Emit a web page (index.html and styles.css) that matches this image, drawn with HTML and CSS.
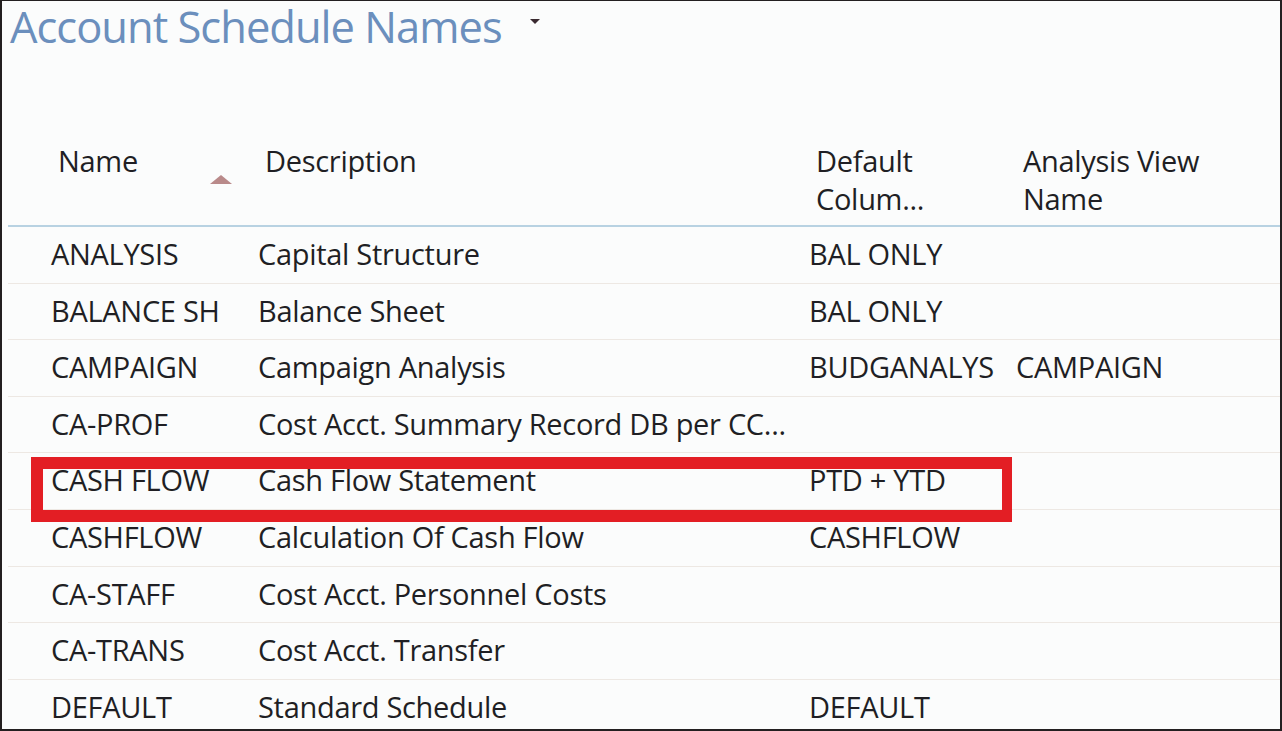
FILE: index.html
```html
<!DOCTYPE html>
<html>
<head>
<meta charset="utf-8">
<link rel="stylesheet" href="styles.css">
</head>
<body>
<div class="frame">
  <div class="title-bar">
    <h1 class="title">Account Schedule Names</h1>
    <span class="caret"></span>
  </div>
  <div class="table">
    <div class="head">
      <div class="hcell name-h"><span>Name</span><span class="sort"></span></div>
      <div class="hcell">Description</div>
      <div class="hcell">Default<br>Colum...</div>
      <div class="hcell">Analysis View<br>Name</div>
    </div>
    <div class="row"><div>ANALYSIS</div><div>Capital Structure</div><div>BAL ONLY</div><div></div></div>
    <div class="row"><div>BALANCE SH</div><div>Balance Sheet</div><div>BAL ONLY</div><div></div></div>
    <div class="row"><div>CAMPAIGN</div><div>Campaign Analysis</div><div>BUDGANALYS</div><div>CAMPAIGN</div></div>
    <div class="row"><div>CA-PROF</div><div>Cost Acct. Summary Record DB per CC...</div><div></div><div></div></div>
    <div class="row highlighted"><div>CASH FLOW</div><div>Cash Flow Statement</div><div>PTD + YTD</div><div></div><span class="mark"></span></div>
    <div class="row"><div>CASHFLOW</div><div>Calculation Of Cash Flow</div><div>CASHFLOW</div><div></div></div>
    <div class="row"><div>CA-STAFF</div><div>Cost Acct. Personnel Costs</div><div></div><div></div></div>
    <div class="row"><div>CA-TRANS</div><div>Cost Acct. Transfer</div><div></div><div></div></div>
    <div class="row"><div>DEFAULT</div><div>Standard Schedule</div><div>DEFAULT</div><div></div></div>
  </div>
</div>
</body>
</html>
```

FILE: styles.css
```css
html, body {
  margin: 0;
  padding: 0;
  background: #fbfcfc;
}
.frame {
  width: 1282px;
  height: 731px;
  box-sizing: border-box;
  border: 2px solid #231f20;
  border-top-width: 1px;
  background: #fbfcfc;
  overflow: hidden;
  font-family: "Open Sans", "Noto Sans", sans-serif;
  color: #1f1f24;
}
.title-bar {
  display: flex;
  align-items: flex-start;
  height: 130px;
  padding-left: 8px;
}
.title {
  margin: 0;
  font-size: 43.5px;
  font-weight: 400;
  line-height: 52px;
  color: #6b8fbd;
  letter-spacing: -1px;
}
.caret {
  margin-left: 28px;
  margin-top: 18px;
  width: 0;
  height: 0;
  border-left: 5px solid transparent;
  border-right: 5px solid transparent;
  border-top: 5px solid #3a2a30;
}
.table {
  padding-left: 6px;
}
.head,
.row {
  display: grid;
  grid-template-columns: 207px 551px 207px 1fr;
  padding-left: 43px;
}
.head {
  height: 96px;
  border-bottom: 2px solid #b8d2e2;
  box-sizing: border-box;
}
.hcell {
  padding-left: 7px;
  font-size: 29px;
  line-height: 38px;
  letter-spacing: -0.3px;
  padding-top: 11px;
}
.name-h {
  display: flex;
  align-items: flex-start;
}
.sort {
  margin-left: auto;
  margin-right: 26px;
  margin-top: 33px;
  width: 0;
  height: 0;
  border-left: 11px solid transparent;
  border-right: 11px solid transparent;
  border-bottom: 9px solid #b98a8a;
}
.row {
  position: relative;
  height: 56.6px;
  line-height: 54px;
  font-size: 29px;
  letter-spacing: -0.3px;
  border-bottom: 1px solid #ede8e3;
  box-sizing: border-box;
  white-space: nowrap;
}
.mark {
  position: absolute;
  left: 23px;
  top: 4px;
  width: 981px;
  height: 65px;
  box-sizing: border-box;
  border: 12px solid #e31e24;
  border-right-width: 10px;
}
```
